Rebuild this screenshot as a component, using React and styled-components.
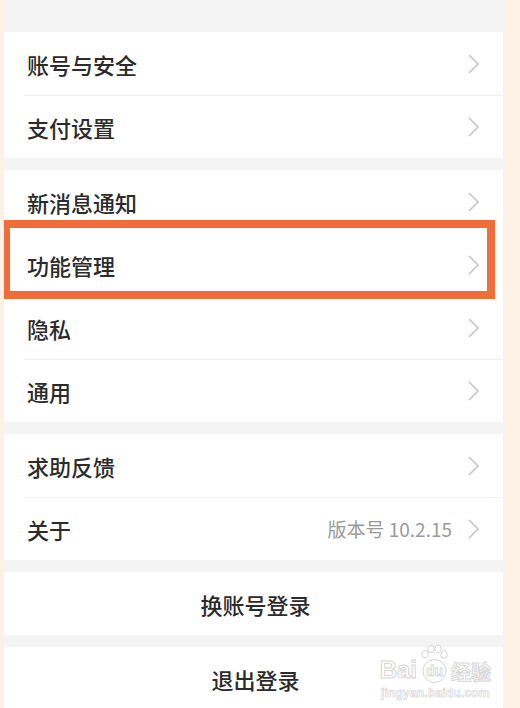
import React from "react";
import styled, { createGlobalStyle } from "styled-components";

const GlobalStyle = createGlobalStyle`
  html, body {
    margin: 0;
    padding: 0;
    background: #fdf1e6;
  }
  body {
    font-family: "Noto Sans CJK SC", "Noto Sans", sans-serif;
  }
`;

const Page = styled.div`
  width: 520px;
  height: 708px;
  overflow: hidden;
  background: #fdf1e6;
  padding-left: 4px;
  box-sizing: border-box;
`;

const Panel = styled.div`
  width: 499px;
  height: 708px;
  background: #f4f4f4;
  padding-top: 32px;
  box-sizing: border-box;
  display: flex;
  flex-direction: column;
  gap: 12px;
  position: relative;
`;

const Group = styled.div`
  background: #fff;
  display: flex;
  flex-direction: column;
`;

const Row = styled.div`
  position: relative;
  height: 63px;
  display: flex;
  align-items: center;
  padding: 0 23px;
  box-sizing: border-box;
  justify-content: ${(p) => (p.$center ? "center" : "space-between")};

  & + &::before {
    content: "";
    display: ${(p) => (p.$noLine ? "none" : "block")};
    position: absolute;
    top: 0;
    left: 20px;
    right: 0;
    height: 1px;
    background: #f0f0f0;
  }
`;

const Label = styled.span`
  font-size: 22px;
  font-weight: 500;
  color: #2b2b2b;
`;

const ButtonLabel = styled.span`
  font-size: 22px;
  color: #2b2b2b;
  font-weight: 500;
  margin-left: 4px;
`;

const Right = styled.div`
  display: flex;
  align-items: center;
  gap: 15px;
`;

const Value = styled.span`
  font-size: 19px;
  color: #9a9a9a;
`;

const Highlight = styled.div`
  position: absolute;
  z-index: 1;
  top: -13px;
  bottom: -3px;
  left: 0;
  right: 8px;
  border: 8px solid #f26b3b;
  border-left-width: 6px;
  pointer-events: none;
`;

const Watermark = styled.div`
  position: absolute;
  right: 12px;
  bottom: 8px;
  display: flex;
  flex-direction: column;
  align-items: center;
  font-family: "Liberation Sans", Arial, sans-serif;
`;

const Logo = styled.div`
  display: flex;
  align-items: flex-end;
  gap: 1px;
`;

const Hollow = styled.span`
  font-family: ${(p) =>
    p.$cjk ? '"Noto Sans CJK SC", sans-serif' : '"Liberation Sans", Arial, sans-serif'};
  font-size: ${(p) => p.$size || 24}px;
  font-weight: 700;
  color: #fff;
  -webkit-text-stroke: 1px #d6d6d6;
  line-height: 1;
  margin-bottom: 2px;
`;

const Domain = styled.span`
  font-size: 12px;
  font-weight: 700;
  color: #fff;
  -webkit-text-stroke: 0.6px #d2d2d2;
  letter-spacing: 0.2px;
  margin-top: 2px;
`;

const Chevron = () => (
  <svg width="13" height="22" viewBox="0 0 13 22">
    <path d="M2 2 L11 11 L2 20" fill="none" stroke="#c6c6c6" strokeWidth="1.6" />
  </svg>
);

const Paw = () => (
  <svg width="32" height="40" viewBox="0 0 32 40">
    <g fill="#fff" stroke="#d6d6d6" strokeWidth="1">
      <ellipse cx="7" cy="10" rx="3.2" ry="3.8" />
      <ellipse cx="13" cy="5" rx="3.2" ry="3.8" />
      <ellipse cx="20" cy="5" rx="3.2" ry="3.8" />
      <ellipse cx="26" cy="10.5" rx="3.2" ry="3.8" />
      <circle cx="16.5" cy="27" r="11.5" />
    </g>
    <text
      x="16.5"
      y="32"
      textAnchor="middle"
      fontSize="14"
      fontWeight="700"
      fontFamily="Liberation Sans, Arial, sans-serif"
      fill="#fff"
      stroke="#d6d6d6"
      strokeWidth="0.8"
    >
      du
    </text>
  </svg>
);

const Item = ({ label, value, highlighted }) => (
  <Row $noLine={highlighted}>
    <Label>{label}</Label>
    <Right>
      {value && <Value>{value}</Value>}
      <Chevron />
    </Right>
    {highlighted && <Highlight />}
  </Row>
);

const App = () => {
  return (
    <Page>
      <GlobalStyle />
      <Panel>
        <Group>
          <Item label="账号与安全" />
          <Item label="支付设置" />
        </Group>
        <Group>
          <Item label="新消息通知" />
          <Item label="功能管理" highlighted />
          <Item label="隐私" />
          <Item label="通用" />
        </Group>
        <Group>
          <Item label="求助反馈" />
          <Item label="关于" value="版本号 10.2.15" />
        </Group>
        <Group>
          <Row $center>
            <ButtonLabel>换账号登录</ButtonLabel>
          </Row>
        </Group>
        <Group>
          <Row $center>
            <ButtonLabel>退出登录</ButtonLabel>
          </Row>
        </Group>
        <Watermark>
          <Logo>
            <Hollow>Bai</Hollow>
            <Paw />
            <Hollow $cjk $size={20}>
              经验
            </Hollow>
          </Logo>
          <Domain>jingyan.baidu.com</Domain>
        </Watermark>
      </Panel>
    </Page>
  );
};

export default App;
